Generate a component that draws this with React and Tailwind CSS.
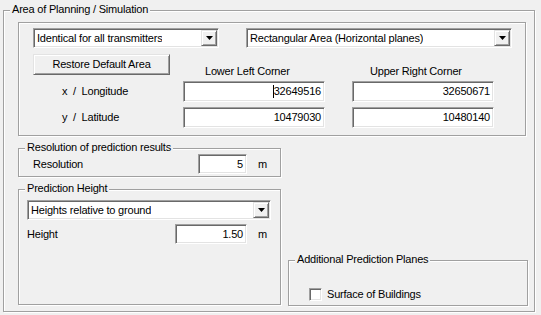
import React from "react";

const SUNKEN =
  "border border-t-[#a0a0a0] border-l-[#a0a0a0] border-b-white border-r-white shadow-[inset_1px_1px_0_#696969,inset_-1px_-1px_0_#e3e3e3]";

function Arrow() {
  return (
    <div className="flex h-[16px] w-[16px] items-center justify-center border border-t-[#e3e3e3] border-l-[#e3e3e3] border-b-[#696969] border-r-[#696969] bg-[#f0f0f0] shadow-[inset_1px_1px_0_#fff,inset_-1px_-1px_0_#a0a0a0]">
      <svg width="7" height="4" viewBox="0 0 7 4">
        <path d="M0 0H7L3.5 4Z" fill="#000" />
      </svg>
    </div>
  );
}

function Combo({ text, className }) {
  return (
    <div className={"flex h-[20px] items-center justify-between bg-white pl-[3px] pr-[1px] " + SUNKEN + " " + className}>
      <span className="truncate">{text}</span>
      <Arrow />
    </div>
  );
}

function Input({ value, className, caret }) {
  return (
    <div className={"flex items-center justify-end bg-white pr-[3px] " + SUNKEN + " " + className}>
      {caret && <span className="inline-block h-[13px] w-[1px] bg-black" />}
      <span>{value}</span>
    </div>
  );
}

function Group({ title, className, children }) {
  return (
    <div className={"relative border border-[#a0a0a0] shadow-[inset_1px_1px_0_#fff,1px_1px_0_#fff] " + className}>
      <div className="absolute -top-[8px] left-[6px] bg-[#f0f0f0] px-[2px] leading-[13px] whitespace-nowrap">{title}</div>
      {children}
    </div>
  );
}

export default function App() {
  return (
    <div className="h-[315px] w-[541px] overflow-hidden bg-[#f0f0f0] pl-[3px] pt-[10px] font-['Liberation_Sans',Arial,sans-serif] text-[11px] leading-[13px] tracking-[-0.2px] text-black">
      <Group title="Area of Planning / Simulation" className="h-[302px] w-[532px] pl-[14px] pt-[11px]">
        <div className="h-[114px] w-[508px] border border-[#a0a0a0] pl-[14px] pt-[5px] shadow-[inset_1px_1px_0_#fff,1px_1px_0_#fff]">
          <div className="flex">
            <Combo text="Identical for all transmitters" className="w-[186px]" />
            <Combo text="Rectangular Area (Horizontal planes)" className="ml-[27px] w-[266px]" />
          </div>
          <div className="mt-[6px] flex h-[27px]">
            <div className="w-[150px]">
              <div className="flex h-[21px] w-[137px] items-center justify-center border border-t-[#e3e3e3] border-l-[#e3e3e3] border-b-[#696969] border-r-[#696969] bg-[#f0f0f0] shadow-[inset_1px_1px_0_#fff,inset_-1px_-1px_0_#a0a0a0]">
                Restore Default Area
              </div>
            </div>
            <div className="flex w-[142px] items-end pb-[3px] pl-[22px]">Lower Left Corner</div>
            <div className="ml-[27px] flex w-[142px] items-end pb-[3px] pl-[18px]">Upper Right Corner</div>
          </div>
          <div className="flex h-[21px] items-center">
            <div className="w-[150px] whitespace-pre pl-[29px]">x  /  Longitude</div>
            <Input value="32649516" caret className="h-[21px] w-[142px]" />
            <Input value="32650671" className="ml-[27px] h-[21px] w-[142px]" />
          </div>
          <div className="mt-[5px] flex h-[21px] items-center">
            <div className="w-[150px] whitespace-pre pl-[29px]">y  /  Latitude</div>
            <Input value="10479030" className="h-[21px] w-[142px]" />
            <Input value="10480140" className="ml-[27px] h-[21px] w-[142px]" />
          </div>
        </div>
        <div className="mt-[12px] flex">
          <div className="w-[263px]">
            <Group title="Resolution of prediction results" className="h-[29px] pl-[14px] pt-[5px]">
              <div className="flex items-center">
                <div className="w-[165px]">Resolution</div>
                <Input value="5" className="h-[20px] w-[49px]" />
                <span className="ml-[11px]">m</span>
              </div>
            </Group>
            <Group title="Prediction Height" className="mt-[12px] h-[116px] pl-[8px] pt-[10px]">
              <Combo text="Heights relative to ground" className="w-[244px]" />
              <div className="mt-[4px] flex items-center">
                <div className="w-[148px]">Height</div>
                <Input value="1.50" className="h-[20px] w-[72px]" />
                <span className="ml-[11px]">m</span>
              </div>
            </Group>
          </div>
          <Group title="Additional Prediction Planes" className="mb-[-1px] ml-[7px] h-[46px] w-[240px] self-end pl-[20px] pt-[27px]">
            <div className="flex items-center">
              <div className={"h-[13px] w-[13px] bg-white " + SUNKEN} />
              <span className="ml-[5px]">Surface of Buildings</span>
            </div>
          </Group>
        </div>
      </Group>
    </div>
  );
}
